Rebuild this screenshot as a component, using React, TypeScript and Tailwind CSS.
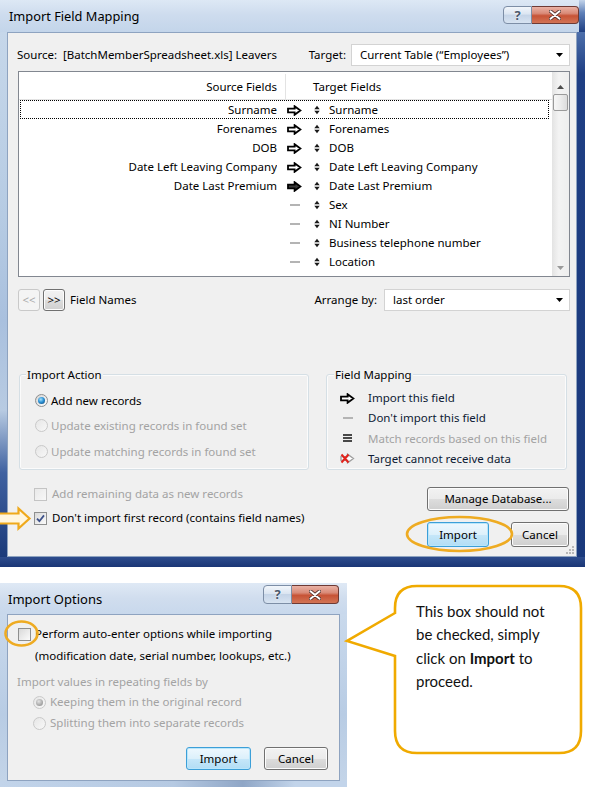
import React from "react";

function Radio({ checked, disabled }: { checked?: boolean; disabled?: boolean }) {
  return (
    <span
      className={`flex h-[13px] w-[13px] shrink-0 items-center justify-center rounded-full border ${
        disabled
          ? "border-[#c9c9c9] bg-[linear-gradient(135deg,#e6e6e6,#f8f8f8)]"
          : "border-[#8e8f8f] bg-[linear-gradient(135deg,#d4d4d4,#ffffff)]"
      }`}
    >
      {checked && (
        <span
          className={`h-[7px] w-[7px] rounded-full ${
            disabled
              ? "bg-[radial-gradient(circle_at_40%_35%,#e4e4e4_0%,#a8a8a8_60%,#8a8a8a_100%)]"
              : "bg-[radial-gradient(circle_at_40%_35%,#a9e2fb_0%,#2d93d6_45%,#0b3f70_100%)]"
          }`}
        />
      )}
    </span>
  );
}

function Check({ checked, disabled }: { checked?: boolean; disabled?: boolean }) {
  return (
    <span
      className={`flex h-[13px] w-[13px] shrink-0 items-center justify-center border ${
        disabled
          ? "border-[#c4c4c4] bg-[linear-gradient(135deg,#e9e9e9,#f7f7f7)]"
          : "border-[#8e8f8f] bg-[linear-gradient(135deg,#d9d9d9,#fbfbfb)]"
      }`}
    >
      {checked && (
        <svg width="9" height="9" viewBox="0 0 9 9">
          <path d="M1 4.6 L3.4 7.2 L8 1.4" fill="none" stroke="#3d5189" strokeWidth="1.8" />
        </svg>
      )}
    </span>
  );
}

function Btn({
  children,
  className = "",
  def,
}: {
  children: React.ReactNode;
  className?: string;
  def?: boolean;
}) {
  return (
    <div
      className={`flex items-center justify-center rounded-[3px] border ${
        def
          ? "border-[#3c9fd8] bg-[linear-gradient(180deg,#eef8fe_0%,#dcf0fb_50%,#c6e7f9_51%,#b2ddf5_100%)] shadow-[inset_0_0_0_1px_#b9e6fb]"
          : "border-[#707070] bg-[linear-gradient(180deg,#f2f2f2_0%,#ebebeb_50%,#dddddd_51%,#cfcfcf_100%)] shadow-[inset_0_0_0_1px_#fcfcfc]"
      } ${className}`}
    >
      {children}
    </div>
  );
}

function DropArrow() {
  return (
    <svg width="7" height="4" viewBox="0 0 7 4">
      <path d="M0 0H7L3.5 4Z" fill="#000" />
    </svg>
  );
}

function Combo({ text, className = "" }: { text: string; className?: string }) {
  return (
    <div
      className={`flex h-[22px] items-center justify-between border border-[#d3d3d3] bg-white pl-[8px] pr-[6px] ${className}`}
    >
      <span>{text}</span>
      <DropArrow />
    </div>
  );
}

function MapArrow({ filled, gray }: { filled?: boolean; gray?: boolean }) {
  return (
    <svg width="15" height="11" viewBox="0 0 15 11">
      <path
        d="M1 3.6H7.6V1.2L13.4 5.5L7.6 9.8V7.4H1Z"
        fill={filled ? "#3a3a3a" : "#fff"}
        stroke={gray ? "#9a9a9a" : "#000"}
        strokeWidth="1.8"
      />
    </svg>
  );
}

function UpDown() {
  return (
    <svg width="6" height="10" viewBox="0 0 6 10">
      <path d="M0.3 4.2L3 0.8L5.7 4.2Z M0.3 5.8L3 9.2L5.7 5.8Z" fill="#1a1a1a" />
    </svg>
  );
}

function Dash() {
  return <span className="block h-[2px] w-[10px] bg-[#b4b4b4]" />;
}

function CaptionButtons({ className = "" }: { className?: string }) {
  return (
    <div className={`flex h-[18px] ${className}`}>
      <div className="flex w-[29px] items-center justify-center rounded-l-[4px] border border-[#7d8ea6] bg-[linear-gradient(180deg,#f2f6fb_0%,#dbe5f1_45%,#c5d4e7_50%,#d7e3f1_100%)] text-[13px] font-bold leading-none text-[#4a586c] [text-shadow:0_0_2px_#fff]">
        ?
      </div>
      <div className="flex w-[47px] items-center justify-center rounded-r-[4px] border border-l-0 border-[#6e3a34] bg-[linear-gradient(180deg,#eab2a5_0%,#d98a77_40%,#c75336_55%,#d27455_100%)]">
        <svg width="12" height="10" viewBox="0 0 12 10">
          <path d="M1.5 1.2L10.5 8.8M10.5 1.2L1.5 8.8" stroke="#4a2a26" strokeWidth="3.6" strokeLinecap="round" />
          <path d="M1.5 1.2L10.5 8.8M10.5 1.2L1.5 8.8" stroke="#fff" strokeWidth="2" strokeLinecap="round" />
        </svg>
      </div>
    </div>
  );
}

const rows: { s: string; t: string; map: boolean }[] = [
  { s: "Surname", t: "Surname", map: true },
  { s: "Forenames", t: "Forenames", map: true },
  { s: "DOB", t: "DOB", map: true },
  { s: "Date Left Leaving Company", t: "Date Left Leaving Company", map: true },
  { s: "Date Last Premium", t: "Date Last Premium", map: true },
  { s: "", t: "Sex", map: false },
  { s: "", t: "NI Number", map: false },
  { s: "", t: "Business telephone number", map: false },
  { s: "", t: "Location", map: false },
];

function FieldTable() {
  return (
    <div className="ml-[10px] mr-[6px] mt-[5px] flex h-[206px] border border-[#828790] bg-white">
      <div className="flex flex-1 flex-col">
        <div className="flex h-[28px] items-center border-b border-[#e3e3e3] pt-[2px]">
          <div className="flex h-full w-[266px] items-center justify-end pr-[8px]">Source Fields</div>
          <div className="h-full w-[1px] bg-[#e3e3e3]" />
          <div className="pl-[27px]">Target Fields</div>
        </div>
        <div className="ml-[1px] mr-[3px] flex flex-col">
          {rows.map((r, i) => (
            <div
              key={i}
              className={`flex h-[19px] items-center border pt-[1px] ${
                i === 0 ? "border-dotted border-[#000]" : "border-transparent"
              }`}
            >
              <div className="w-[256px] truncate text-right">{r.s}</div>
              <div className="ml-[10px] flex w-[15px] items-center justify-center">
                {r.map ? <MapArrow filled={i === 4} /> : <Dash />}
              </div>
              <div className="ml-[12px] flex w-[6px] items-center">
                <UpDown />
              </div>
              <div className="ml-[9px]">{r.t}</div>
            </div>
          ))}
        </div>
      </div>
      <div className="flex w-[17px] flex-col bg-[linear-gradient(90deg,#e3e3e3,#f3f3f3_40%,#eeeeee)]">
        <div className="flex h-[22px] items-end justify-center pb-[5px]">
          <svg width="7" height="4" viewBox="0 0 7 4">
            <path d="M0 4L3.5 0L7 4Z" fill="#4d4d4d" />
          </svg>
        </div>
        <div className="mx-[1px] h-[17px] rounded-[2px] border border-[#9a9a9a] bg-[linear-gradient(90deg,#f7f7f7,#ececec_50%,#dcdcdc)]" />
        <div className="flex-1" />
        <div className="flex h-[17px] items-center justify-center">
          <svg width="7" height="4" viewBox="0 0 7 4">
            <path d="M0 0H7L3.5 4Z" fill="#9a9a9a" />
          </svg>
        </div>
      </div>
    </div>
  );
}

function MainWindow() {
  return (
    <div className="flex h-[567px] w-[585px] flex-col">
      <div className="flex h-[32px]">
        <div className="flex flex-1 items-start justify-between bg-[linear-gradient(180deg,#dde8f5_0%,#cedcee_45%,#c3d5ea_100%)]">
          <span className="ml-[9px] mt-[7px] text-[12.8px] leading-[18px] text-black">Import Field Mapping</span>
          <CaptionButtons className="mt-[6px]" />
        </div>
        <div className="w-[6px] bg-[linear-gradient(180deg,#c3d4ea_0%,#5f80b8_40%,#1f3f82_100%)]" />
      </div>
      <div className="flex flex-1">
        <div className="w-[7px] bg-[linear-gradient(180deg,#c6d7ea_0%,#b6cbe3_35%,#a9c0de_55%,#b8cbe2_72%,#3f61a0_84%,#1b3a7a_100%)]" />
        <div className="flex w-[570px] flex-col border border-[#8ea3c0] bg-[#f0f0f0]">
          {/* Source row */}
          <div className="mt-[11px] flex h-[22px] items-center pl-[9px] pr-[6px]">
            <span>Source:&nbsp; [BatchMemberSpreadsheet.xls] Leavers</span>
            <span className="ml-auto">Target:</span>
            <Combo text="Current Table (“Employees”)" className="ml-[5px] w-[219px]" />
          </div>
          <FieldTable />
          {/* nav row */}
          <div className="mt-[12px] flex h-[22px] items-center pl-[10px] pr-[6px]">
            <div className="flex h-[22px] w-[22px] items-center justify-center rounded-[3px] border border-[#c9c9c9] bg-[#f4f4f4] text-[#a8a8a8]">
              &lt;&lt;
            </div>
            <Btn className="ml-[3px] h-[22px] w-[22px]">&gt;&gt;</Btn>
            <span className="ml-[5px]">Field Names</span>
            <span className="ml-auto">Arrange by:</span>
            <Combo text="last order" className="ml-[7px] w-[186px]" />
          </div>
          {/* groups */}
          <div className="mt-[63px] flex pl-[11px] pr-[7px]">
            <div className="flex h-[96px] w-[290px] flex-col rounded-[3px] border border-[#d5dfe5] shadow-[inset_0_0_0_1px_#fbfbfb]">
              <span className="-mt-[8px] ml-[6px] block w-fit bg-[#f0f0f0] px-[1px] leading-[16px]">Import Action</span>
              <div className="mt-[5px] flex flex-col pl-[15px]">
                <div className="flex h-[25px] items-center gap-[3px]">
                  <Radio checked />
                  <span>Add new records</span>
                </div>
                <div className="flex h-[25.5px] items-center gap-[3px] text-[#a3a3a3]">
                  <Radio disabled />
                  <span>Update existing records in found set</span>
                </div>
                <div className="flex h-[25.5px] items-center gap-[3px] text-[#a3a3a3]">
                  <Radio disabled />
                  <span>Update matching records in found set</span>
                </div>
              </div>
            </div>
            <div className="ml-[17px] flex h-[96px] w-[241px] flex-col rounded-[3px] border border-[#d5dfe5] shadow-[inset_0_0_0_1px_#fbfbfb]">
              <span className="-mt-[8px] ml-[7px] block w-fit bg-[#f0f0f0] px-[1px] leading-[16px]">Field Mapping</span>
              <div className="mt-[5px] flex flex-col pl-[13px]">
                <div className="flex h-[20px] items-center">
                  <span className="flex w-[15px] justify-center">
                    <MapArrow />
                  </span>
                  <span className="ml-[13px] text-[#0d1a33]">Import this field</span>
                </div>
                <div className="flex h-[20px] items-center">
                  <span className="flex w-[15px] justify-center">
                    <Dash />
                  </span>
                  <span className="ml-[13px] text-[#0d1a33]">Don&apos;t import this field</span>
                </div>
                <div className="flex h-[20.5px] items-center">
                  <span className="flex w-[15px] justify-center">
                    <svg width="9" height="8" viewBox="0 0 9 8">
                      <path d="M0 1H9M0 4H9M0 7H9" stroke="#111" strokeWidth="1.6" />
                    </svg>
                  </span>
                  <span className="ml-[13px] text-[#a3a3a3]">Match records based on this field</span>
                </div>
                <div className="flex h-[20.5px] items-center">
                  <span className="flex w-[15px] justify-center">
                    <svg width="15" height="11" viewBox="0 0 15 11">
                      <path d="M1 3.6H7.6V1.2L13.4 5.5L7.6 9.8V7.4H1Z" fill="#fff" stroke="#a0a0a0" strokeWidth="1.4" />
                      <path d="M1.5 1.5L8.5 9.5M8.5 1.5L1.5 9.5" stroke="#e3231c" strokeWidth="2" />
                    </svg>
                  </span>
                  <span className="ml-[13px] text-[#0d1a33]">Target cannot receive data</span>
                </div>
              </div>
            </div>
          </div>
          {/* bottom */}
          <div className="flex flex-1 justify-between pl-[26px] pr-[7px]">
            <div className="flex flex-col gap-[4px] pt-[14px]">
              <div className="flex h-[20px] items-center gap-[5px] text-[#a3a3a3]">
                <Check disabled />
                <span>Add remaining data as new records</span>
              </div>
              <div className="flex h-[20px] items-center gap-[5px]">
                <Check checked />
                <span>Don&apos;t import first record (contains field names)</span>
              </div>
            </div>
            <div className="relative flex w-[142px] flex-col pt-[17px]">
              <Btn className="h-[24px] w-[142px]">Manage Database...</Btn>
              <div className="mt-[11px] flex justify-between">
                <Btn def className="h-[25px] w-[62px]">
                  Import
                </Btn>
                <Btn className="h-[25px] w-[58px]">Cancel</Btn>
              </div>
              <svg className="absolute bottom-[1px] right-[-6px]" width="10" height="10" viewBox="0 0 10 10">
                <g fill="#b8b8b8">
                  <rect x="7" y="1" width="2" height="2" />
                  <rect x="4" y="4" width="2" height="2" />
                  <rect x="7" y="4" width="2" height="2" />
                  <rect x="1" y="7" width="2" height="2" />
                  <rect x="4" y="7" width="2" height="2" />
                  <rect x="7" y="7" width="2" height="2" />
                </g>
              </svg>
            </div>
          </div>
        </div>
        <div className="w-[8px] bg-[linear-gradient(180deg,#4d6fab_0%,#1f3f84_8%,#1a397c_100%)]" />
      </div>
      <div className="h-[10px] bg-[linear-gradient(180deg,#2d4c8d_0%,#1a3676_100%)]" />
    </div>
  );
}

function OptionsWindow() {
  return (
    <div className="flex h-[204px] w-[347px] flex-col">
      <div className="flex h-[31px] items-start justify-between bg-[linear-gradient(180deg,#dfe9f5_0%,#d0ddee_50%,#c8d8ec_100%)]">
        <span className="ml-[8px] mt-[7px] text-[13px] leading-[18px]">Import Options</span>
        <CaptionButtons className="mr-[8px] mt-[2px] h-[19px]" />
      </div>
      <div className="flex flex-1">
        <div className="w-[7px] bg-[linear-gradient(180deg,#c9d9ec,#b8cce4_60%,#c3d4e8)]" />
        <div className="flex w-[333px] flex-col border border-[#8ea3c0] bg-[#f0f0f0]">
          <div className="mt-[9px] flex h-[20px] items-center gap-[4px] pl-[10px]">
            <Check />
            <span>Perform auto-enter options while importing</span>
          </div>
          <div className="mt-[2px] flex h-[20px] items-center pl-[27px]">
            (modification date, serial number, lookups, etc.)
          </div>
          <div className="mt-[6px] flex h-[20px] items-center pl-[9px] text-[#a3a3a3]">
            Import values in repeating fields by
          </div>
          <div className="flex h-[20px] items-center gap-[4px] pl-[25px] text-[#a3a3a3]">
            <Radio checked disabled />
            <span>Keeping them in the original record</span>
          </div>
          <div className="mt-[1px] flex h-[20px] items-center gap-[4px] pl-[25px] text-[#a3a3a3]">
            <Radio disabled />
            <span>Splitting them into separate records</span>
          </div>
          <div className="mt-[14px] flex justify-end gap-[13px] pr-[11px]">
            <Btn def className="h-[23px] w-[65px]">
              Import
            </Btn>
            <Btn className="h-[23px] w-[64px]">Cancel</Btn>
          </div>
        </div>
        <div className="w-[7px] bg-[linear-gradient(180deg,#c9d9ec,#b8cce4_60%,#c3d4e8)]" />
      </div>
      <div className="h-[6px] bg-[linear-gradient(90deg,#c2d4ea_0%,#b5c9e2_50%,#8fa6c6_70%,#c2d4ea_85%)]" />
    </div>
  );
}

function Annotations() {
  return (
    <svg className="pointer-events-none absolute left-0 top-0" width="592" height="795" viewBox="0 0 592 795">
      <path
        d="M-2 513.5H18.5V508.5L29.5 518.5L18.5 528.5V523.5H-2Z"
        fill="#fff6df"
        stroke="#efa91b"
        strokeWidth="2.2"
        strokeLinejoin="miter"
      />
      <ellipse cx="459.5" cy="534" rx="52.5" ry="17" fill="none" stroke="#eeab22" strokeWidth="2.6" />
      <ellipse cx="21.5" cy="633.5" rx="16" ry="12" fill="none" stroke="#eeab22" strokeWidth="2.6" />
      <path
        d="M395 613 L347 641 L395 656 L395 731 Q395 753 417 753 L559 753 Q581 753 581 731 L581 608 Q581 586 559 586 L417 586 Q395 586 395 608 Z"
        fill="#fff"
        stroke="#f0aa00"
        strokeWidth="2.6"
        strokeLinejoin="miter"
      />
    </svg>
  );
}

export default function App() {
  return (
    <div className="relative h-[795px] w-[592px] overflow-hidden bg-white font-['Noto_Sans',sans-serif] text-[11.5px] text-black">
      <MainWindow />
      <div className="mt-[16px]">
        <OptionsWindow />
      </div>
      <Annotations />
      <div className="absolute left-[416px] top-[600px] w-[160px] font-['Lato',sans-serif] text-[15px] leading-[23.3px] text-[#111]">
        This box should not
        <br />
        be checked, simply
        <br />
        click on <b>Import</b> to
        <br />
        proceed.
      </div>
    </div>
  );
}
